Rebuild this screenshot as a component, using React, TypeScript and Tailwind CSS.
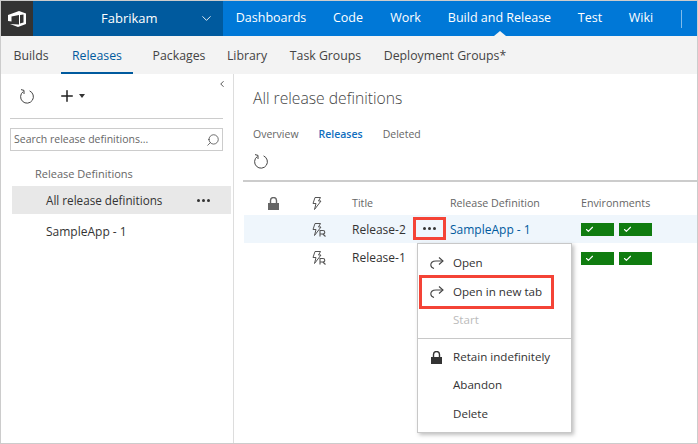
import { Check, ChevronDown, ChevronLeft, Plus, Search } from 'lucide-react';

const font = { fontFamily: '"Open Sans", "Noto Sans", sans-serif' };

const topLinks = [
  { label: 'Dashboards', cls: 'w-[96px]' },
  { label: 'Code', cls: 'w-[58px]' },
  { label: 'Work', cls: 'w-[57px]' },
  { label: 'Build and Release', cls: 'w-[131px]' },
  { label: 'Test', cls: 'w-[50px]' },
  { label: 'Wiki', cls: 'w-[52px]' },
];

const subLinks = [
  { label: 'Builds', cls: 'w-[60px]' },
  { label: 'Releases', cls: 'w-[72px]', active: true },
  { label: 'Packages', cls: 'w-[92px]' },
  { label: 'Library', cls: 'w-[44px]' },
  { label: 'Task Groups', cls: 'w-[113px]' },
  { label: 'Deployment Groups*', cls: 'w-[126px]' },
];

function Refresh() {
  return (
    <svg width="15" height="16" viewBox="0 0 15 16" fill="none" stroke="#444" strokeWidth="1">
      <path d="M9.6 2.9 A6.4 6.4 0 1 1 3.2 3.6" />
      <path d="M1 1.6 L4 2.4 L4 6" />
    </svg>
  );
}

function Share() {
  return (
    <svg width="14" height="12" viewBox="0 0 14 12" fill="none" stroke="#444" strokeWidth="1.1">
      <path d="M9 0.5 L13 4 L9 7.5" />
      <path d="M13 4 H6 C2 4 0.8 6 0.8 8 C0.8 9.6 1.8 10.8 4 11.5" />
    </svg>
  );
}

function Lock({ color }: { color: string }) {
  return (
    <svg width="11" height="13" viewBox="0 0 11 13" fill={color}>
      <path d="M0 6 H11 V13 H0 Z" />
      <path d="M2.5 6 V3.5 A3 3 0 0 1 8.5 3.5 V6" fill="none" stroke={color} strokeWidth="1.4" />
    </svg>
  );
}

function Bolt({ withR }: { withR?: boolean }) {
  return (
    <svg width="16" height="14" viewBox="0 0 16 14" fill="none" stroke="#555" strokeWidth="1">
      <path d="M4 0.5 H9.5 L7.5 4 H10 L3.5 12.5 L5 6.5 H2 Z" />
      {withR && <path d="M9 13.5 V7.5 H12 A1.7 1.7 0 0 1 12 11 H9 M11.8 11 L14.5 13.5" strokeWidth="1.1" />}
    </svg>
  );
}

function Dots() {
  return (
    <div className="flex gap-[2px]">
      <span className="size-[3px] rounded-full bg-[#333]" />
      <span className="size-[3px] rounded-full bg-[#333]" />
      <span className="size-[3px] rounded-full bg-[#333]" />
    </div>
  );
}

function Env() {
  return (
    <div className="flex gap-[5px]">
      <div className="flex h-[13px] w-[33px] items-center bg-[#107c10] pl-[4px]">
        <Check size={9} color="#fff" strokeWidth={3} />
      </div>
      <div className="flex h-[13px] w-[33px] items-center bg-[#107c10] pl-[4px]">
        <Check size={9} color="#fff" strokeWidth={3} />
      </div>
    </div>
  );
}

export default function App() {
  return (
    <div style={font} className="flex h-[444px] w-[698px] flex-col overflow-hidden border border-[#ccc] bg-white text-[12px] text-[#333]">
      {/* top bar */}
      <div className="flex h-[35px] shrink-0 bg-[#0078d7] text-[12.5px] text-white">
        <div className="flex w-[32px] items-center justify-center bg-[#333]">
          <svg width="18" height="16" viewBox="0 0 18 16" fill="#fff">
            <path d="M0 4 L11 0 L18 2.5 V13 L10 16 L2 13 L11 13.5 V4 L3.5 5.5 V10.5 L0 10 Z" />
            <path d="M12 4 L15.5 3.5 V11.5 L12 12.5 Z" fill="#333" />
          </svg>
        </div>
        <div className="relative flex w-[190px] items-center bg-[#005a9e] text-[13px]">
          <span className="ml-[68px]">Fabrikam</span>
          <ChevronDown size={15} strokeWidth={1.4} className="absolute left-[166px] top-[10px]" />
        </div>
        <div className="flex items-center">
          {topLinks.map((l) => (
            <div key={l.label} className={`relative flex h-full items-center justify-center ${l.cls}`}>
              {l.label}
              {l.label === 'Build and Release' && (
                <span className="absolute bottom-0 left-[60px] size-0 border-x-[6px] border-b-[5px] border-x-transparent border-b-[#f3f3f3]" />
              )}
            </div>
          ))}
          <div className="ml-[14px] h-[18px] w-px bg-[#7fbbeb]" />
        </div>
      </div>

      {/* sub bar */}
      <div className="flex h-[38px] shrink-0 bg-[#f3f3f3] text-[12.3px] text-[#444]">
        {subLinks.map((l) => (
          <div
            key={l.label}
            className={`flex items-center justify-center whitespace-nowrap border-b-2 pt-[4px] ${l.cls} ${l.active ? 'border-[#005a9e] text-[#005a9e]' : 'border-transparent'}`}
          >
            {l.label}
          </div>
        ))}
      </div>

      <div className="flex min-h-0 flex-1">
        {/* left panel */}
        <aside className="relative w-[233px] shrink-0 border-r border-[#ddd] pl-[9px]">
          <ChevronLeft size={10} strokeWidth={2} className="absolute right-[6px] top-[5px]" />
          <div className="flex h-[45px] w-[213px] items-center border-b border-[#ccc] pb-[1px] pl-[10px]">
            <Refresh />
            <Plus size={18} strokeWidth={2} className="ml-[23px] text-[#222]" />
            <span className="ml-[3px] size-0 border-x-[3px] border-t-[4px] border-x-transparent border-t-[#333]" />
          </div>
          <div className="mt-[9px] flex h-[23px] w-[213px] items-center justify-between border border-[#ccc] pl-[3px] pr-[2px] text-[10.5px] text-[#666]">
            Search release definitions...
            <Search size={14} strokeWidth={1.2} className="-scale-x-100 text-[#333]" />
          </div>
          <div className="mt-[15px] pl-[25px] text-[11px] leading-[15px] text-[#666]">Release Definitions</div>
          <div className="ml-[2px] mt-[5px] flex h-[28px] w-[219px] items-center justify-between bg-[#e8e8e8] pl-[34px] pr-[21px] pt-[1px] text-[11.7px]">
            All release definitions
            <Dots />
          </div>
          <div className="flex h-[36px] items-center pl-[36px]">SampleApp - 1</div>
        </aside>

        {/* main */}
        <main className="relative min-w-0 flex-1">
          <h1 className="ml-[19px] mt-[13px] text-[15.7px] font-light leading-[22px] text-[#444]">All release definitions</h1>
          <div className="ml-[19px] mt-[18px] flex gap-[20px] text-[10.5px] leading-[15px] text-[#666]">
            <span>Overview</span>
            <span className="font-semibold text-[#106ebe]">Releases</span>
            <span>Deleted</span>
          </div>
          <div className="ml-[20px] mt-[11px] h-[16px]">
            <Refresh />
          </div>
          <div className="ml-[9px] mt-[11px] border-t-2 border-[#ccc]">
            <div className="flex h-[33px] items-center pt-[10px] text-[10.7px] text-[#666]">
              <div className="w-[25px]" />
              <div className="w-[43px]">
                <Lock color="#666" />
              </div>
              <div className="w-[41px]">
                <Bolt />
              </div>
              <div className="w-[98px]">Title</div>
              <div className="w-[131px]">Release Definition</div>
              <div>Environments</div>
            </div>
            <div className="ml-[1px] flex h-[28px] items-center bg-[#eff6fc] pt-[1px]">
              <div className="ml-[67px] w-[41px]">
                <Bolt withR />
              </div>
              <div className="w-[98px]">Release-2</div>
              <div className="w-[131px] text-[#005a9e]">SampleApp - 1</div>
              <Env />
            </div>
            <div className="ml-[1px] flex h-[29px] items-center pt-[1px]">
              <div className="ml-[67px] w-[41px]">
                <Bolt withR />
              </div>
              <div className="w-[229px]">Release-1</div>
              <Env />
            </div>
          </div>

          {/* red box on the row's menu button */}
          <div className="absolute left-[179px] top-[143px] flex h-[23px] w-[33px] items-center justify-center border-[3px] border-[#f44336]">
            <Dots />
          </div>

          {/* context menu */}
          <div className="absolute left-[183px] top-[169px] w-[155px] border border-[#c8c8c8] bg-white py-[4px] text-[11.6px] shadow-[2px_2px_4px_rgba(0,0,0,0.25)]">
            <div className="flex h-[28px] items-center pl-[12px] pt-[1px]">
              <Share />
              <span className="ml-[9px]">Open</span>
            </div>
            <div className="relative flex h-[29px] items-center pl-[12px] pt-[2px]">
              <Share />
              <span className="ml-[9px]">Open in new tab</span>
              <div className="absolute -top-[1px] left-[1px] h-[34px] w-[135px] border-[3px] border-[#f44336]" />
            </div>
            <div className="flex h-[29px] items-center pl-[35px] pt-[1px] text-[#bbb]">Start</div>
            <div className="my-[4px] border-t border-[#c8c8c8]" />
            <div className="flex h-[28px] items-center pl-[13px]">
              <Lock color="#333" />
              <span className="ml-[11px]">Retain indefinitely</span>
            </div>
            <div className="flex h-[28px] items-center pl-[35px]">Abandon</div>
            <div className="flex h-[29px] items-center pl-[35px]">Delete</div>
          </div>
        </main>
      </div>
    </div>
  );
}
